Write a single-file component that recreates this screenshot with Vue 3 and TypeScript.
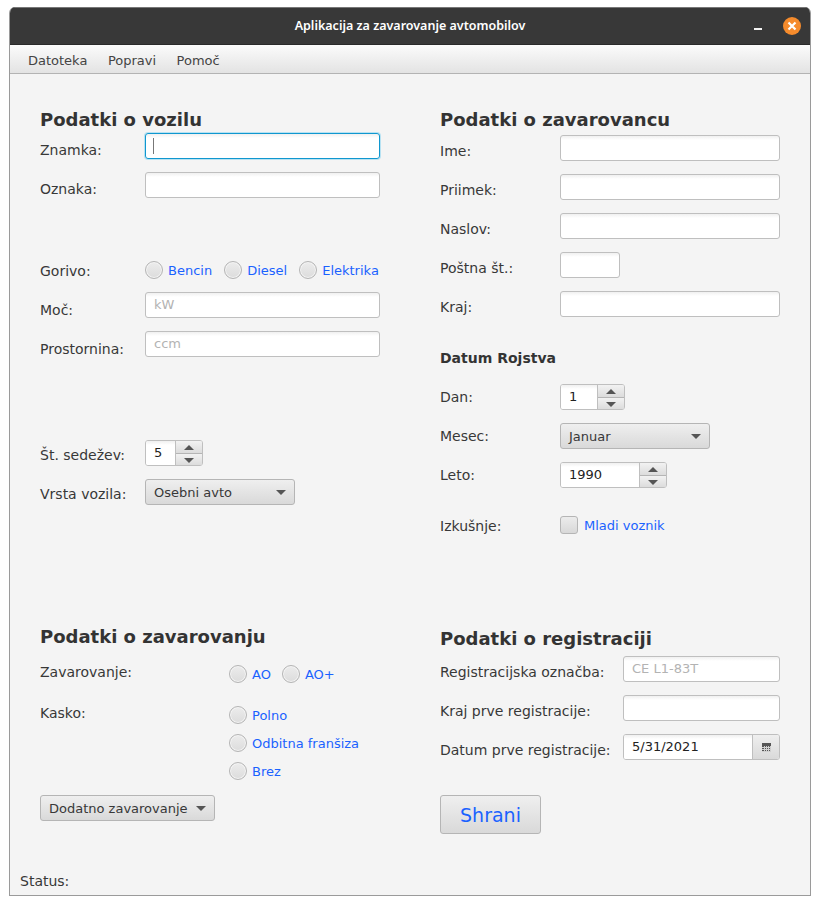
<script setup lang="ts">
import { ref } from "vue";

const seats = ref("5");
const day = ref("1");
const year = ref("1990");
const firstReg = ref("5/31/2021");

const vehicleFuels = ["Bencin", "Diesel", "Elektrika"];
const personFields = [
  { label: "Ime:", short: false },
  { label: "Priimek:", short: false },
  { label: "Naslov:", short: false },
  { label: "Poštna št.:", short: true },
  { label: "Kraj:", short: false },
];
const cascoOptions = ["Polno", "Odbitna franšiza", "Brez"];
</script>

<template>
  <div class="window">
    <header class="titlebar">
      <span class="title">Aplikacija za zavarovanje avtomobilov</span>
      <span class="minimize"></span>
      <span class="close">
        <svg width="10" height="10" viewBox="0 0 10 10">
          <path d="M1.5 1.5 8.5 8.5M8.5 1.5 1.5 8.5" stroke="#fff" stroke-width="2.2" fill="none" />
        </svg>
      </span>
    </header>

    <nav class="menubar">
      <span>Datoteka</span>
      <span>Popravi</span>
      <span>Pomoč</span>
    </nav>

    <main class="content">
      <section class="vehicle">
        <h2>Podatki o vozilu</h2>
        <div class="rows">
          <div class="row">
            <label>Znamka:</label>
            <div class="field focused"><span class="caret"></span></div>
          </div>
          <div class="row">
            <label>Oznaka:</label>
            <div class="field"></div>
          </div>
          <div class="row fuel">
            <label>Gorivo:</label>
            <div class="options">
              <span v-for="f in vehicleFuels" :key="f" class="radio-item">
                <span class="radio"></span>{{ f }}
              </span>
            </div>
          </div>
          <div class="row low">
            <label>Moč:</label>
            <div class="field hint">kW</div>
          </div>
          <div class="row low">
            <label>Prostornina:</label>
            <div class="field hint">ccm</div>
          </div>
          <div class="row seats">
            <label>Št. sedežev:</label>
            <div class="spinner s-seats">
              <span class="value">{{ seats }}</span>
              <span class="arrows"><i class="up"></i><i class="down"></i></span>
            </div>
          </div>
          <div class="row type">
            <label>Vrsta vozila:</label>
            <div class="combo c-type">Osebni avto<i class="down"></i></div>
          </div>
        </div>
      </section>

      <section class="person">
        <h2>Podatki o zavarovancu</h2>
        <div class="rows">
          <div v-for="p in personFields" :key="p.label" class="row">
            <label>{{ p.label }}</label>
            <div class="field" :class="{ short: p.short }"></div>
          </div>
          <h3>Datum Rojstva</h3>
          <div class="row birth">
            <label>Dan:</label>
            <div class="spinner s-day">
              <span class="value">{{ day }}</span>
              <span class="arrows"><i class="up"></i><i class="down"></i></span>
            </div>
          </div>
          <div class="row birth">
            <label>Mesec:</label>
            <div class="combo c-month">Januar<i class="down"></i></div>
          </div>
          <div class="row birth">
            <label>Leto:</label>
            <div class="spinner s-year">
              <span class="value">{{ year }}</span>
              <span class="arrows"><i class="up"></i><i class="down"></i></span>
            </div>
          </div>
          <div class="row experience">
            <label>Izkušnje:</label>
            <span class="radio-item"><span class="checkbox"></span>Mladi voznik</span>
          </div>
        </div>
      </section>

      <section class="insurance">
        <h2>Podatki o zavarovanju</h2>
        <div class="ins-row">
          <label>Zavarovanje:</label>
          <div class="options">
            <span class="radio-item"><span class="radio"></span>AO</span>
            <span class="radio-item"><span class="radio"></span>AO+</span>
          </div>
        </div>
        <div class="ins-row casco">
          <label>Kasko:</label>
          <div class="stack">
            <span v-for="c in cascoOptions" :key="c" class="radio-item">
              <span class="radio"></span>{{ c }}
            </span>
          </div>
        </div>
        <div class="combo c-extra">Dodatno zavarovanje<i class="down"></i></div>
      </section>

      <section class="registration">
        <h2>Podatki o registraciji</h2>
        <div class="rows">
          <div class="row">
            <label>Registracijska označba:</label>
            <div class="field hint">CE L1-83T</div>
          </div>
          <div class="row">
            <label>Kraj prve registracije:</label>
            <div class="field"></div>
          </div>
          <div class="row">
            <label>Datum prve registracije:</label>
            <div class="date">
              <span class="value">{{ firstReg }}</span>
              <span class="date-btn">
                <svg width="9" height="9" viewBox="0 0 9 9" shape-rendering="crispEdges">
                  <rect width="9" height="9" fill="#555" />
                  <path d="M2 3v6M4 3v6M6 3v6M8 3v6" stroke="#cfcfcf" stroke-width="1" />
                  <path d="M0 4.5h9M0 6.5h9M0 8.5h9" stroke="#cfcfcf" stroke-width="1" />
                </svg>
              </span>
            </div>
          </div>
        </div>
        <button class="save" type="button">Shrani</button>
      </section>
    </main>

    <footer class="status">Status:</footer>
  </div>
</template>

<style>
html,
body {
  margin: 0;
  background: #fff;
}
</style>

<style scoped>
.window {
  box-sizing: border-box;
  width: 802px;
  height: 889px;
  margin: 7px 0 0 9px;
  display: flex;
  flex-direction: column;
  background: #f4f4f4;
  border: 1px solid #9a9a9a;
  border-top: 0;
  border-radius: 6px 6px 0 0;
  color: #383838;
  font-family: "DejaVu Sans", sans-serif;
  font-size: 14px;
  overflow: hidden;
}
.titlebar {
  flex: none;
  position: relative;
  height: 38px;
  margin: 0 -1px;
  background: #383838;
  border-top: 1px solid #777;
  border-bottom: 1px solid #2a2a2a;
  box-sizing: border-box;
  display: flex;
  align-items: center;
  justify-content: center;
}
.title {
  color: #fff;
  font-family: "Noto Sans", sans-serif;
  font-weight: 600;
  font-size: 12.5px;
  margin-top: -1px;
}
.minimize {
  position: absolute;
  left: 745px;
  top: 20px;
  width: 8px;
  height: 2px;
  background: #f2f2f2;
}
.close {
  position: absolute;
  left: 774px;
  top: 9px;
  width: 18px;
  height: 18px;
  border-radius: 50%;
  background: #f58b2c;
  display: flex;
  align-items: center;
  justify-content: center;
}
.menubar {
  flex: none;
  height: 29px;
  box-sizing: border-box;
  padding: 2px 0 0 18px;
  display: flex;
  align-items: center;
  gap: 20.5px;
  background: linear-gradient(#fbfbfb, #e3e3e3);
  border-bottom: 1px solid #b3b3b3;
  font-size: 13px;
  color: #444;
}
.content {
  flex: 1;
  display: grid;
  grid-template-columns: 400px 1fr;
  grid-template-rows: 533px auto;
  padding-left: 30px;
  padding-right: 30px;
}
h2 {
  margin: 0;
  font-size: 18px;
  line-height: 22px;
  font-weight: 700;
  color: #333;
}
h3 {
  font-size: 14px;
  line-height: 20px;
  font-weight: 700;
  color: #333;
}
.rows {
  display: flex;
  flex-direction: column;
  gap: 13px;
}
.row {
  display: flex;
  height: 26px;
}
.row label {
  padding-top: 6px;
  line-height: 20px;
  white-space: nowrap;
}
.vehicle {
  padding-top: 35px;
}
.vehicle .rows {
  margin-top: 2px;
}
.vehicle .row label {
  width: 105px;
  padding-top: 7px;
}
.vehicle .field {
  width: 235px;
}
.vehicle .row.low label,
.vehicle .row.fuel label {
  padding-top: 8px;
}
.vehicle .fuel {
  margin-top: 42px;
}
.fuel .options {
  align-self: flex-start;
  margin-top: 8px;
}
.vehicle .seats {
  margin-top: 70px;
}
.vehicle .seats label,
.vehicle .type label {
  padding-top: 5px;
}
.person {
  padding-top: 35px;
}
.person .rows {
  margin-top: 4px;
}
.person .row label {
  width: 120px;
}
.person .field {
  width: 220px;
}
.person .field.short {
  width: 60px;
}
.person h3 {
  margin: 18px 0 3px;
}
.person .birth label {
  padding-top: 3px;
}
.person .experience {
  margin-top: 14px;
  align-items: flex-start;
}
.person .experience label {
  padding-top: 1px;
}
.experience .radio-item {
  margin-top: 1px;
}
.field {
  box-sizing: border-box;
  height: 26px;
  padding: 0 8px;
  line-height: 24px;
  background: linear-gradient(#f0f0f0 0, #fff 4px);
  border: 1px solid #bfbfbf;
  border-radius: 3px;
}
.focused {
  border-color: #1097cf;
  box-shadow: 0 0 0 1px #b8e2f2;
  padding: 4px 7px 0;
}
.caret {
  display: block;
  width: 1px;
  height: 16px;
  background: #777;
}
.hint {
  color: #b3b3b3;
  font-size: 13px;
}
.options {
  display: flex;
  gap: 12px;
}
.stack {
  display: flex;
  flex-direction: column;
  gap: 10px;
}
.radio-item {
  display: inline-flex;
  align-items: center;
  gap: 5px;
  height: 18px;
  color: #1a62ff;
  font-size: 13px;
  white-space: nowrap;
}
.radio {
  box-sizing: border-box;
  width: 18px;
  height: 18px;
  border-radius: 50%;
  border: 1px solid #b5b5b5;
  background: linear-gradient(#ececec, #dcdcdc);
  box-shadow: inset 0 0 0 1px #f4f4f4;
}
.checkbox {
  box-sizing: border-box;
  width: 18px;
  height: 18px;
  margin-right: 1px;
  border-radius: 3px;
  border: 1px solid #b5b5b5;
  background: linear-gradient(#ececec, #d8d8d8);
}
.spinner,
.date {
  box-sizing: border-box;
  height: 26px;
  display: flex;
  background: #fff;
  border: 1px solid #bfbfbf;
  border-radius: 3px;
  overflow: hidden;
}
.s-seats {
  width: 58px;
}
.s-day {
  width: 65px;
}
.s-year {
  width: 107px;
}
.value {
  flex: 1;
  padding-left: 8px;
  line-height: 24px;
  font-size: 13px;
  color: #222;
  background: linear-gradient(#f0f0f0 0, #fff 4px);
}
.arrows {
  flex: none;
  width: 26px;
  display: flex;
  flex-direction: column;
  border-left: 1px solid #bfbfbf;
  background: #dedede;
}
.arrows i {
  flex: 1;
  position: relative;
  background: linear-gradient(#f2f2f2, #dcdcdc);
}
.arrows i + i {
  border-top: 1px solid #b5b5b5;
}
.arrows i::after {
  content: "";
  position: absolute;
  left: 8px;
  top: 4px;
  border-left: 5px solid transparent;
  border-right: 5px solid transparent;
}
.arrows .up::after {
  border-bottom: 5px solid #555;
}
.arrows .down::after {
  border-top: 5px solid #555;
}
.combo {
  box-sizing: border-box;
  height: 26px;
  display: flex;
  align-items: center;
  justify-content: space-between;
  padding: 0 8px;
  font-size: 13px;
  border: 1px solid #b5b5b5;
  border-radius: 3px;
  background: linear-gradient(#efefef, #d9d9d9);
}
.combo .down {
  border-left: 5px solid transparent;
  border-right: 5px solid transparent;
  border-top: 5px solid #555;
}
.c-type,
.c-month {
  width: 150px;
}
.c-extra {
  width: 175px;
  margin-top: 15px;
}
.insurance {
  padding-top: 19px;
}
.ins-row {
  display: flex;
  margin-top: 14px;
}
.ins-row label {
  width: 189px;
  line-height: 20px;
}
.ins-row.casco {
  margin-top: 20px;
}
.ins-row .options {
  margin-top: 3px;
  gap: 11px;
}
.casco .stack {
  margin-top: 3px;
}
.registration {
  padding-top: 21px;
}
.registration .rows {
  margin-top: 6px;
}
.registration .row {
  justify-content: space-between;
}
.registration .field,
.date {
  width: 157px;
}
.date-btn {
  flex: none;
  width: 26px;
  display: flex;
  align-items: center;
  justify-content: center;
  border-left: 1px solid #bfbfbf;
  background: linear-gradient(#efefef, #d9d9d9);
}
.save {
  display: block;
  box-sizing: border-box;
  width: 101px;
  height: 39px;
  margin-top: 35px;
  padding: 0;
  color: #1a62ff;
  font-family: inherit;
  font-size: 19px;
  border: 1px solid #b5b5b5;
  border-radius: 3px;
  background: linear-gradient(#efefef, #d9d9d9);
}
.status {
  flex: none;
  height: 30px;
  padding: 6px 0 0 10px;
  box-sizing: border-box;
  line-height: 20px;
}
</style>
